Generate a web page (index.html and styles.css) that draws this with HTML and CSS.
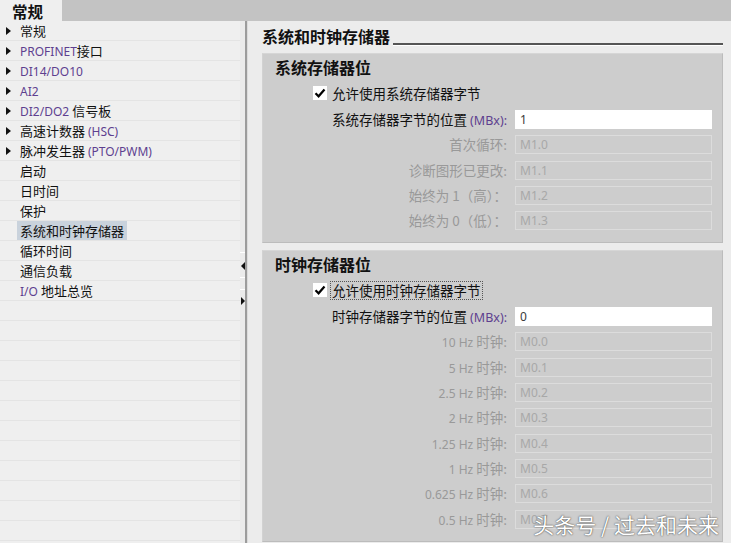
FILE: index.html
```html
<!DOCTYPE html>
<html lang="zh">
<head>
<meta charset="utf-8">
<link rel="stylesheet" href="styles.css">
</head>
<body>
<div class="app">
  <div class="topbar"><div class="tab">常规</div></div>
  <div class="main">
    <div class="tree">
      <div class="row"><span class="slot"><span class="tri"></span></span><span class="lbl">常规</span></div>
      <div class="row"><span class="slot"><span class="tri"></span></span><span class="lbl"><span class="lat">PROFINET</span>接口</span></div>
      <div class="row"><span class="slot"><span class="tri"></span></span><span class="lbl"><span class="lat">DI14/DO10</span></span></div>
      <div class="row"><span class="slot"><span class="tri"></span></span><span class="lbl"><span class="lat">AI2</span></span></div>
      <div class="row"><span class="slot"><span class="tri"></span></span><span class="lbl"><span class="lat">DI2/DO2 </span>信号板</span></div>
      <div class="row"><span class="slot"><span class="tri"></span></span><span class="lbl">高速计数器 <span class="lat">(HSC)</span></span></div>
      <div class="row"><span class="slot"><span class="tri"></span></span><span class="lbl">脉冲发生器 <span class="lat">(PTO/PWM)</span></span></div>
      <div class="row"><span class="slot"></span><span class="lbl">启动</span></div>
      <div class="row"><span class="slot"></span><span class="lbl">日时间</span></div>
      <div class="row"><span class="slot"></span><span class="lbl">保护</span></div>
      <div class="row"><span class="slot"></span><span class="lbl sel">系统和时钟存储器</span></div>
      <div class="row"><span class="slot"></span><span class="lbl">循环时间</span></div>
      <div class="row"><span class="slot"></span><span class="lbl">通信负载</span></div>
      <div class="row"><span class="slot"></span><span class="lbl"><span class="lat">I/O </span>地址总览</span></div>
      <div class="row"></div>
      <div class="row"></div>
      <div class="row"></div>
      <div class="row"></div>
      <div class="row"></div>
      <div class="row"></div>
      <div class="row"></div>
      <div class="row"></div>
      <div class="row"></div>
      <div class="row"></div>
      <div class="row"></div>
      <div class="row"></div>
    </div>
    <div class="splitter">
      <div class="strip">
        <div class="seg s1"></div>
        <div class="arrow-left"></div>
        <div class="seg s2"></div>
        <div class="seg s3"></div>
        <div class="arrow-right"></div>
      </div>
      <div class="dark"></div>
      <div class="light"></div>
    </div>
    <div class="content">
      <div class="title"><span class="title-text">系统和时钟存储器</span><span class="rule"></span></div>

      <section class="group g1">
        <div class="gtitle">系统存储器位</div>
        <div class="check-row">
          <span class="box"><svg width="14" height="14" viewBox="0 0 14 14"><path d="M2.5 7.2 L5.6 10.3 L11.5 3.6" fill="none" stroke="#000" stroke-width="2.2"/></svg></span>
          <span class="clabel">允许使用系统存储器字节</span>
        </div>
        <div class="fields">
          <div class="flabel">系统存储器字节的位置 <span class="mbx">(MBx):</span></div><div class="input on">1</div>
          <div class="flabel dis">首次循环:</div><div class="input off">M1.0</div>
          <div class="flabel dis">诊断图形已更改:</div><div class="input off">M1.1</div>
          <div class="flabel dis">始终为 1（高）：</div><div class="input off">M1.2</div>
          <div class="flabel dis">始终为 0（低）：</div><div class="input off">M1.3</div>
        </div>
      </section>

      <section class="group g2">
        <div class="gtitle">时钟存储器位</div>
        <div class="check-row">
          <span class="box"><svg width="14" height="14" viewBox="0 0 14 14"><path d="M2.5 7.2 L5.6 10.3 L11.5 3.6" fill="none" stroke="#000" stroke-width="2.2"/></svg></span>
          <span class="clabel focus">允许使用时钟存储器字节</span>
        </div>
        <div class="fields">
          <div class="flabel">时钟存储器字节的位置 <span class="mbx">(MBx):</span></div><div class="input on">0</div>
          <div class="flabel dis"><span class="hz">10 Hz</span> 时钟:</div><div class="input off">M0.0</div>
          <div class="flabel dis"><span class="hz">5 Hz</span> 时钟:</div><div class="input off">M0.1</div>
          <div class="flabel dis"><span class="hz">2.5 Hz</span> 时钟:</div><div class="input off">M0.2</div>
          <div class="flabel dis"><span class="hz">2 Hz</span> 时钟:</div><div class="input off">M0.3</div>
          <div class="flabel dis"><span class="hz">1.25 Hz</span> 时钟:</div><div class="input off">M0.4</div>
          <div class="flabel dis"><span class="hz">1 Hz</span> 时钟:</div><div class="input off">M0.5</div>
          <div class="flabel dis"><span class="hz">0.625 Hz</span> 时钟:</div><div class="input off">M0.6</div>
          <div class="flabel dis"><span class="hz">0.5 Hz</span> 时钟:</div><div class="input off">M0.7</div>
        </div>
      </section>
    </div>
  </div>
  <div class="watermark">头条号 / 过去和未来</div>
</div>
</body>
</html>
```
FILE: styles.css
```css
* { box-sizing: border-box; }
html, body { margin: 0; padding: 0; }
body {
  width: 731px;
  height: 543px;
  overflow: hidden;
  background: #ececec;
  font-family: "Noto Sans", "Noto Sans CJK SC", sans-serif;
  color: #111;
}
.app {
  position: relative;
  width: 731px;
  height: 543px;
  display: flex;
  flex-direction: column;
}
.topbar {
  height: 21px;
  background: #c3c3c3;
  display: flex;
  flex-shrink: 0;
}
.tab {
  width: 62px;
  height: 21px;
  background: #efefef;
  font-family: "Noto Sans CJK SC", sans-serif;
  font-weight: 700;
  font-size: 15.5px;
  line-height: 20px;
  padding-top: 1px;
  padding-left: 12px;
  color: #111;
}
.main {
  flex: 1;
  display: flex;
  min-height: 0;
}
.tree {
  width: 240px;
  background: #efefef;
  overflow: hidden;
  flex-shrink: 0;
}
.row {
  height: 20px;
  border-bottom: 1px solid #e4e4e4;
  display: flex;
  align-items: center;
  padding-left: 6px;
  font-family: "Noto Sans CJK SC", sans-serif;
  font-size: 13px;
}
.slot {
  width: 14px;
  height: 19px;
  display: flex;
  align-items: center;
  flex-shrink: 0;
}
.tri {
  width: 0;
  height: 0;
  border-left: 5px solid #111;
  border-top: 4px solid transparent;
  border-bottom: 4px solid transparent;
}
.lbl {
  line-height: 19px;
  white-space: nowrap;
}
.lbl.sel {
  background: #c9d2dc;
  margin-left: -3px;
  padding: 0 3px;
}
.lat {
  font-family: "Noto Sans", sans-serif;
  font-size: 12px;
  color: #5e3f8f;
}
.splitter {
  width: 8px;
  display: flex;
  flex-shrink: 0;
}
.strip {
  width: 5px;
  background: #ebebeb;
  display: flex;
  flex-direction: column;
  align-items: flex-start;
}
.seg { width: 5px; height: 1px; background: #fff; }
.s1 { margin-top: 231px; }
.arrow-left {
  margin-top: 9px;
  margin-left: 1px;
  width: 0; height: 0;
  border-right: 4px solid #111;
  border-top: 4px solid transparent;
  border-bottom: 4px solid transparent;
}
.s2 { margin-top: 7px; }
.s3 { margin-top: 11px; }
.arrow-right {
  margin-top: 7px;
  margin-left: 1px;
  width: 0; height: 0;
  border-left: 4px solid #111;
  border-top: 4px solid transparent;
  border-bottom: 4px solid transparent;
}
.dark { width: 2px; background: #9c9c9c; }
.light { width: 1px; background: #dcdcdc; }
.content {
  flex: 1;
  padding: 0 8px 0 14px;
  display: flex;
  flex-direction: column;
}
.title {
  height: 26px;
  display: flex;
  align-items: flex-start;
}
.title-text {
  margin-top: 5px;
  font-family: "Noto Sans CJK SC", sans-serif;
  font-weight: 700;
  font-size: 16px;
  line-height: 20px;
  white-space: nowrap;
}
.rule {
  flex: 1;
  height: 24px;
  margin-left: 3px;
  border-bottom: 2px solid #555;
  box-shadow: 0 1px 0 #fff;
}
.group {
  background: #cdcdcd;
  border: 1px solid #bcbcbc;
  border-top-color: #d6d6d6;
  border-left-color: #d2d2d2;
  display: flex;
  flex-direction: column;
}
.g1 { margin-top: 6px; height: 190px; }
.g2 { margin-top: 7px; height: 292px; }
.gtitle {
  margin-top: 3px;
  padding-left: 12px;
  font-family: "Noto Sans CJK SC", sans-serif;
  font-weight: 700;
  font-size: 16px;
  line-height: 20px;
  color: #111;
}
.check-row {
  margin-top: 7px;
  height: 18px;
  padding-left: 50px;
  display: flex;
  align-items: center;
}
.box {
  width: 14px;
  height: 14px;
  background: #fff;
  display: flex;
  flex-shrink: 0;
}
.clabel {
  margin-left: 3px;
  font-family: "Noto Sans CJK SC", sans-serif;
  font-size: 13.5px;
  line-height: 17px;
  padding: 0 1px;
  border: 1px solid transparent;
  white-space: nowrap;
}
.clabel.focus { border: 1px dotted #555; }
.fields {
  margin-top: 8px;
  padding-right: 10px;
  display: grid;
  grid-template-columns: 1fr 197px;
  column-gap: 8px;
  row-gap: 6.33px;
  grid-auto-rows: 19px;
}
.flabel {
  text-align: right;
  font-family: "Noto Sans CJK SC", sans-serif;
  font-size: 13.5px;
  line-height: 19px;
  white-space: nowrap;
  color: #111;
}
.flabel.dis { color: #999; }
.mbx {
  font-family: "Noto Sans", sans-serif;
  font-size: 12.5px;
  color: #5e3f8f;
}
.hz {
  font-family: "Noto Sans", sans-serif;
  font-size: 12px;
}
.input {
  height: 19px;
  padding-left: 4px;
  font-family: "Noto Sans", sans-serif;
  font-size: 12px;
  line-height: 17px;
}
.input.on {
  background: #fff;
  border: 1px solid #fff;
  color: #3a3a3a;
}
.input.off {
  background: #cdcdcd;
  border: 1px solid #dcdcdc;
  color: #a8a8a8;
}
.watermark {
  position: absolute;
  right: 12px;
  bottom: 6px;
  font-family: "Noto Sans CJK SC", sans-serif;
  font-size: 21px;
  line-height: 25px;
  color: #fff;
  text-shadow: 0 0 2px rgba(0,0,0,0.55), 0 0 1px rgba(0,0,0,0.5);
  white-space: nowrap;
}
```
